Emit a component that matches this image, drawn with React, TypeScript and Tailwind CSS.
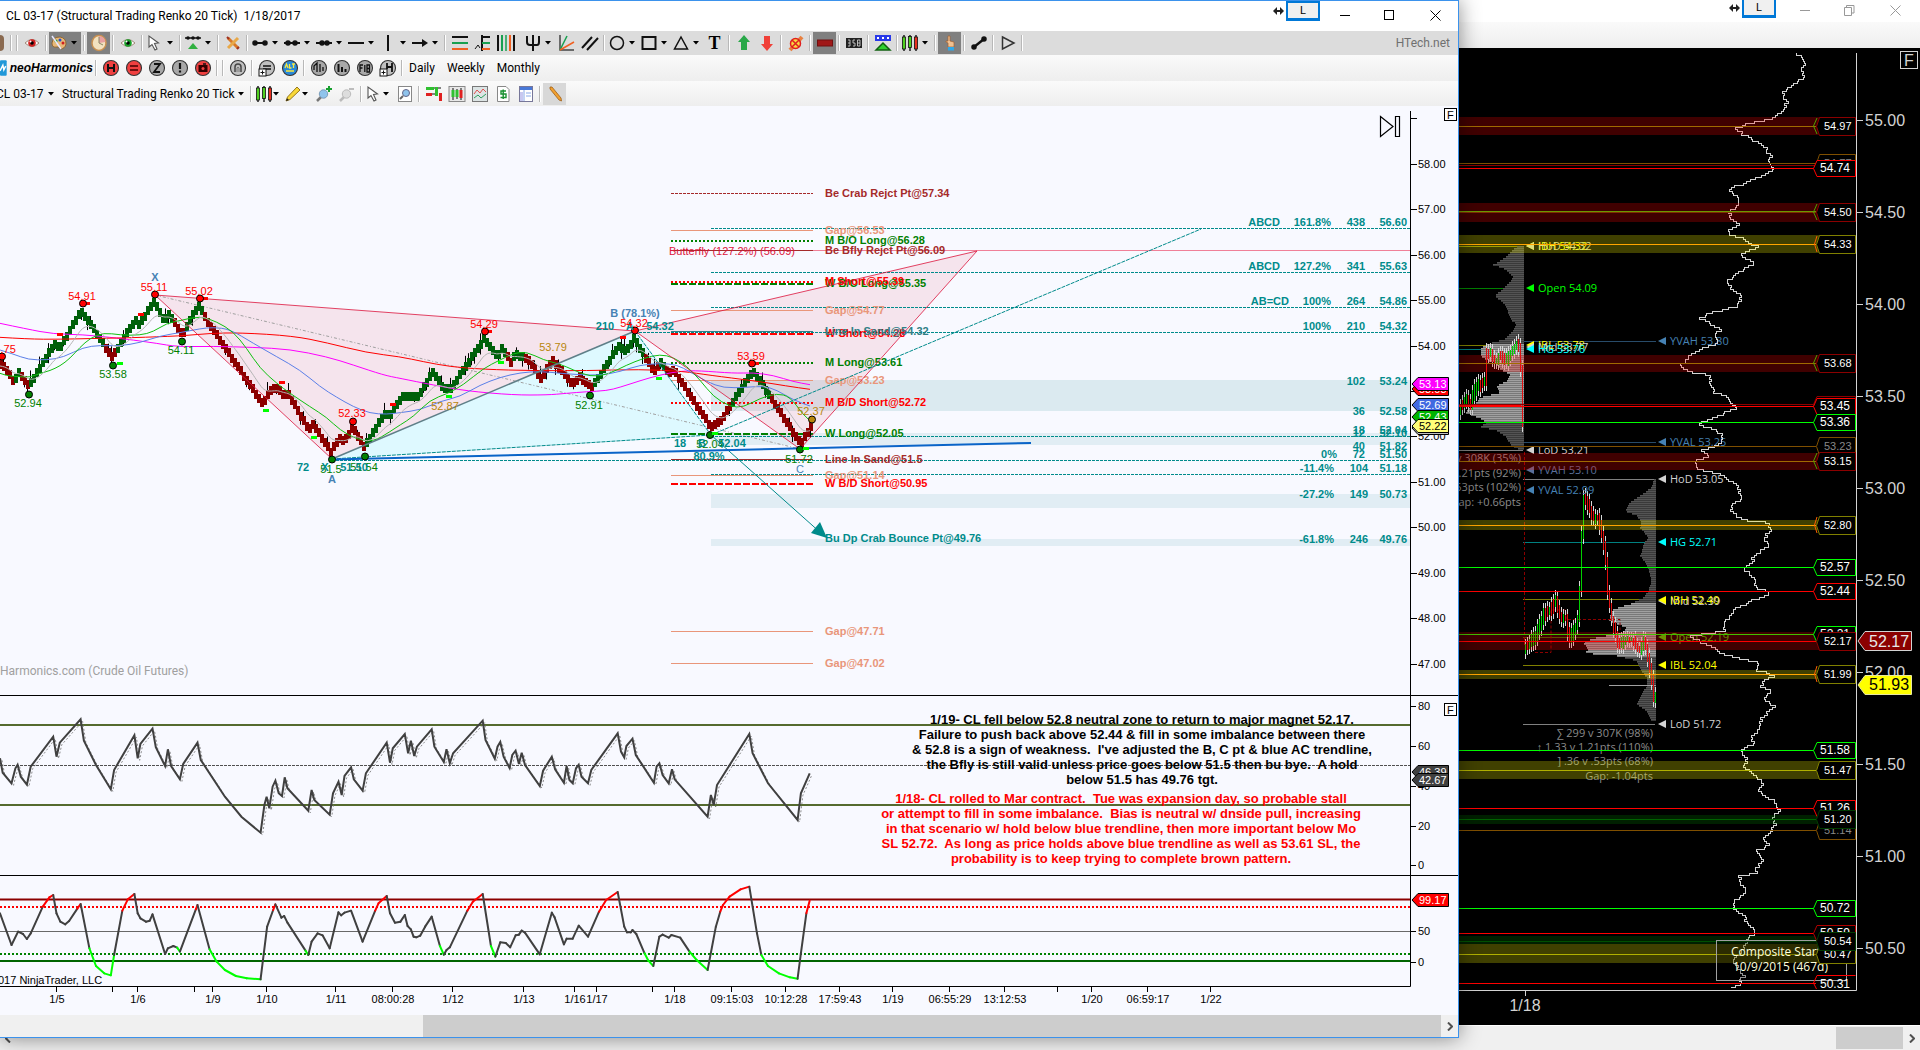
import type { ReactNode } from "react"

type Pt = [number, number]

const rand = (i: number) => {
  const v = Math.sin(i * 12.9898) * 43758.5453
  return v - Math.floor(v)
}

// flat "x,y x,y" strings, scaled to chart coordinates
const parse = (s: string, ox: number, oy: number, sx = 3, sy = 3): Pt[] =>
  s.split(" ").map((p) => {
    const [x, y] = p.split(",").map(Number)
    return [ox + x / sx, oy + y / sy]
  })

const toPoints = (pts: Pt[]) => pts.map(([x, y]) => `${x.toFixed(1)},${y.toFixed(1)}`).join(" ")

const smooth = (pts: Pt[]) => {
  let d = `M${pts[0][0]},${pts[0][1]}`
  for (let i = 1; i < pts.length - 1; i++) {
    const mx = (pts[i][0] + pts[i + 1][0]) / 2
    const my = (pts[i][1] + pts[i + 1][1]) / 2
    d += `Q${pts[i][0].toFixed(1)},${pts[i][1].toFixed(1)} ${mx.toFixed(1)},${my.toFixed(1)}`
  }
  const last = pts[pts.length - 1]
  return `${d}L${last[0]},${last[1]}`
}

const yAtX = (pts: Pt[], x: number) => {
  for (let i = 1; i < pts.length; i++) {
    if (x <= pts[i][0]) {
      const [x0, y0] = pts[i - 1]
      const [x1, y1] = pts[i]
      return y0 + ((y1 - y0) * (x - x0)) / (x1 - x0 || 1)
    }
  }
  return pts[pts.length - 1][1]
}

const xAtY = (pts: Pt[], y: number) => {
  for (let i = 1; i < pts.length; i++) {
    if (y <= pts[i][1]) {
      const [x0, y0] = pts[i - 1]
      const [x1, y1] = pts[i]
      return x0 + ((x1 - x0) * (y - y0)) / (y1 - y0 || 1)
    }
  }
  return pts[pts.length - 1][0]
}

/* ---------- price panel data ---------- */

const price: Pt[] = [
  ...parse("0,310 8,315 40,365 55,335 85,375 160,250 178,262 240,150 262,180 300,240 335,290 380,215 405,180 415,190 460,125 490,180 505,160 545,225 575,165 597,135 615,175 785,430 805,395 830,380 850,410 860,395 925,510 937,490 990,575 1018,530 1030,545 1055,500 1090,560 1150,460 1170,460 1210,400", 0, 260),
  ...parse("10,410 50,410 95,335 130,385 150,385 250,235 290,290 302,260 330,305 345,280 385,300 420,355 455,300 515,370 538,350 570,380 600,340 655,255 675,275 700,235 760,335 780,305 800,335 820,330 930,500 960,480 1057,330 1200,550 1238,485", 400, 260),
]

const redRanges: Pt[] = [[0, 13], [20, 28], [103, 117], [172, 184], [202, 366], [507, 512], [523, 594], [645, 658], [664, 731], [770, 813]]
const isRed = (x: number) => redRanges.some(([a, b]) => x >= a && x < b)

const bricks = Array.from({ length: 271 }, (_, i) => {
  const x = i * 3
  const y = Math.round(yAtX(price, x) / 2) * 2
  return {
    x,
    y,
    color: isRed(x) ? "#8b0000" : "#00600a",
    up: rand(i) > 0.84 ? 6 + rand(i + 500) * 6 : 0,
    down: rand(i + 900) > 0.84 ? 6 + rand(i + 1400) * 6 : 0,
  }
})

let ema = bricks[0].y
const emaLine: Pt[] = bricks.map((b) => {
  ema += (b.y - ema) * 0.2
  return [b.x, ema + 2]
})

const averages = [
  {
    color: "#ff00ff",
    pts: [
      ...parse("0,190 80,207 160,222 250,224 330,232 400,240 470,250 530,260 640,259 760,262 870,268 980,290 1060,315 1150,345", 0, 260),
      ...parse("0,355 100,375 200,393 340,405 440,405 500,400 560,395 620,392 660,382 720,362 780,345 840,333 900,332 1000,340 1060,338 1120,346 1180,365 1230,374", 400, 260),
    ],
  },
  {
    color: "#ff0000",
    pts: [
      ...parse("0,232 80,237 180,238 300,235 400,233 540,228 630,220 720,218 880,228 980,248 1100,278", 0, 260),
      ...parse("0,290 70,305 150,320 250,328 400,332 560,332 720,328 850,334 930,346 1060,362 1160,378 1230,388", 400, 260),
    ],
  },
  {
    color: "#5b7fe8",
    pts: [
      ...parse("0,270 40,282 85,299 140,300 190,292 250,262 300,256 360,258 420,248 480,228 540,218 600,206 640,202 690,208 760,250 830,290 900,330 960,380 1010,412 1060,440 1110,460 1160,463", 0, 260),
      ...parse("0,458 60,450 120,424 180,410 240,375 300,352 360,338 420,334 480,340 540,344 600,346 660,335 720,315 780,310 830,314 870,335 920,365 970,384 1040,382 1090,378 1130,390 1180,420 1230,438", 400, 260),
    ],
  },
  {
    color: "#10c010",
    pts: [
      ...parse("0,340 20,348 60,350 90,352 120,340 150,332 180,318 210,295 240,262 270,235 310,218 360,225 420,226 460,215 500,190 540,182 600,168 650,185 700,215 740,265 780,325 830,370 870,400 930,440 980,472 1020,510 1070,538 1120,545 1170,515", 0, 260),
      ...parse("0,495 40,470 90,420 140,402 190,375 250,325 300,300 340,280 380,275 430,300 480,312 520,330 570,350 620,345 680,315 730,295 780,283 820,292 860,318 900,360 940,410 990,440 1030,442 1080,415 1130,400 1170,410 1210,465 1240,490", 400, 260),
    ],
  },
]

const GREEN = "#008000"
const TEAL = "#008b8b"
const BROWN = "#a52a2a"
const SALMON = "#e9967a"

// [y, color, width, dash, label]
const levels: [number, string, number, string, string][] = [
  [193.5, BROWN, 1, "3 1", "Be Crab Rejct Pt@57.34"],
  [230.5, SALMON, 1, "", "Gap@56.53"],
  [241, GREEN, 2, "2 2", "M B/O Long@56.28"],
  [250.5, BROWN, 1, "", "Be Bfly Rejct Pt@56.09"],
  [284, GREEN, 2, "7 2", "W B/O Long@55.35"],
  [282, "#ff0000", 2, "2 2", "M Short@55.39"],
  [310.5, SALMON, 1, "", "Gap@54.77"],
  [334, "#ff0000", 2, "7 2", "W Short@54.28"],
  [331.5, "#2f7f86", 1, "", "Line In Sand@54.32"],
  [363, GREEN, 2, "2 2", "M Long@53.61"],
  [380.5, SALMON, 1, "", "Gap@53.23"],
  [403, "#ff0000", 2, "2 2", "M B/D Short@52.72"],
  [434, GREEN, 2, "7 2", "W Long@52.05"],
  [459.5, BROWN, 1, "", "Line In Sand@51.5"],
  [475.5, SALMON, 1, "", "Gap@51.14"],
  [484, "#ff0000", 2, "7 2", "W B/D Short@50.95"],
  [631.5, SALMON, 1, "", "Gap@47.71"],
  [663.5, SALMON, 1, "", "Gap@47.02"],
]

const fibLines: Pt[] = [[711, 228.5], [711, 272.5], [711, 307.5], [635, 332.5], [711, 436.5], [332, 460.5], [711, 474.5]]

// [baseline, name, percent, ticks, price]
const fibLabels: [number, string, string, string, string][] = [
  [226, "ABCD", "161.8%", "438", "56.60"],
  [270, "ABCD", "127.2%", "341", "55.63"],
  [305, "AB=CD", "100%", "264", "54.86"],
  [330, "", "100%", "210", "54.32"],
  [385, "", "", "102", "53.24"],
  [415, "", "", "36", "52.58"],
  [434, "", "", "18", "52.04"],
  [437, "", "", "12", "52.10"],
  [450, "", "", "40", "51.82"],
  [458, "", "0%", "72", "51.50"],
  [472, "", "-11.4%", "104", "51.18"],
  [498, "", "-27.2%", "149", "50.73"],
  [543, "", "-61.8%", "246", "49.76"],
]

// [text, x, baseline, color, bold]
const swings: [string, number, number, string, boolean?][] = [
  ["53.75", 2, 353, "#ff0000"],
  ["54.91", 82, 300, "#ff0000"],
  ["55.11", 154, 291, "#ff0000"],
  ["55.02", 199, 295, "#ff0000"],
  ["52.33", 352, 417, "#ff0000"],
  ["54.29", 484, 328, "#ff0000"],
  ["53.59", 751, 360, "#ff0000"],
  ["52.94", 28, 407, GREEN],
  ["53.58", 113, 378, GREEN],
  ["54.11", 181, 354, GREEN],
  ["52.91", 589, 409, GREEN],
  ["51.5", 331, 473, GREEN],
  ["51.54", 364, 471, GREEN],
  ["52.04", 710, 448, GREEN],
  ["51.72", 799, 463, GREEN],
  ["53.79", 553, 351, "#b8860b"],
  ["52.87", 445, 410, "#b8860b"],
  ["52.37", 811, 415, "#b8860b"],
  ["72", 303, 471, TEAL, true],
  ["X", 325, 471, TEAL, true],
  ["51.50", 354, 471, TEAL, true],
  ["210", 605, 330, TEAL, true],
  ["A", 630, 330, TEAL, true],
  ["54.32", 660, 330, TEAL, true],
  ["54.32", 634, 327, "#ff0000"],
  ["18", 680, 447, TEAL, true],
  ["B", 702, 447, TEAL, true],
  ["52.04", 732, 447, TEAL, true],
  ["80.9%", 709, 460, TEAL, true],
  ["X", 155, 281, "#4682b4", true],
  ["A", 332, 483, "#4682b4", true],
  ["B (78.1%)", 635, 317, "#4682b4", true],
  ["C", 800, 473, "#4682b4"],
]

const dots: [number, number, string][] = [
  [2, 356.5, "#ff0000"], [83, 303.5, "#ff0000"], [155, 294.5, "#ff0000"], [200, 298.5, "#ff0000"],
  [353, 421.5, "#ff0000"], [485, 331.5, "#ff0000"], [635, 330.5, "#ff0000"], [752, 363.5, "#ff0000"],
  [29, 394.5, GREEN], [113, 365.5, GREEN], [182, 341.5, GREEN], [332, 459.5, GREEN], [365, 456.5, GREEN],
  [590, 395.5, GREEN], [710, 435, GREEN], [800, 449.5, GREEN], [812, 419.5, "#b8860b"],
]

const redMarks: Pt[] = [[84, 303], [57, 334], [138, 314], [202, 298], [279, 382], [390, 404], [486, 331], [620, 337], [753, 363]]
const limeMarks: Pt[] = [[117, 363], [263, 410], [311, 437], [446, 396], [498, 362], [656, 378], [712, 433], [803, 448]]

const times: [number, string][] = [
  [57, "1/5"], [113, ""], [138, "1/6"], [195, ""], [213, "1/9"], [267, "1/10"], [336, "1/11"], [393, "08:00:28"],
  [453, "1/12"], [524, "1/13"], [575, "1/16"], [597, "1/17"], [653, ""], [675, "1/18"], [732, "09:15:03"],
  [786, "10:12:28"], [840, "17:59:43"], [893, "1/19"], [950, "06:55:29"], [1005, "13:12:53"], [1058, ""],
  [1092, "1/20"], [1148, "06:59:17"], [1211, "1/22"],
]

/* ---------- oscillators ---------- */

const stoch = parse(
  "0,355 5,398 21,430 28,385 32,374 38,410 49,434 56,380 97,290 103,350 109,308 147,238 153,302 175,375 202,448 208,390 245,286 251,355 256,312 278,266 284,322 301,378 306,328 312,378 328,418 334,372 360,308 366,360 410,470 440,530 475,578 482,495 486,470 491,505 497,440 502,422 508,460 514,468 519,412 524,445 562,512 568,450 573,480 601,524 607,460 617,425 623,465 628,408 640,382 645,418 661,452 667,400 705,308 711,368 716,325 738,282 744,340 749,302 755,348 760,320 787,268 792,320 809,366 814,328 820,370 826,340 880,242 885,300 902,356 907,320 912,306 918,350 929,384 934,345 940,332 946,372 951,338 957,375 984,438 990,392 1006,350 1012,388 1028,428 1033,378 1038,420 1044,430 1050,385 1055,374 1060,410 1072,430 1078,390 1126,280 1132,335 1138,352 1142,318 1153,296 1159,345 1192,428 1197,380 1202,370 1208,405 1219,430 1225,388 1230,418 1290,530 1296,465 1301,495 1307,435 1366,282 1372,340 1400,430 1454,540 1460,460 1476,400",
  0, 640, 1.823, 3,
)

const cci = parse(
  "0,820 21,915 33,875 42,882 49,897 56,880 78,800 90,772 97,765 103,820 110,845 119,853 126,843 141,806 147,792 163,925 175,978 190,1000 202,1006 208,945 223,812 233,778 245,762 251,820 256,835 266,845 273,842 278,823 301,942 306,925 316,918 323,923 328,935 357,808 360,795 382,928 395,965 410,990 430,1008 450,1015 475,1018 487,860 498,810 502,793 513,833 518,828 524,848 557,932 562,945 568,905 579,880 588,886 601,925 617,817 622,826 628,818 640,812 661,905 684,812 690,790 705,768 711,820 720,848 730,845 738,825 743,858 749,868 754,890 759,892 766,887 775,860 787,830 802,918 809,944 814,930 820,922 852,812 862,785 880,762 895,918 903,950 912,907 922,909 930,922 940,886 946,884 951,872 957,878 984,943 1006,818 1011,832 1028,913 1033,896 1044,896 1055,857 1072,890 1092,815 1105,780 1126,756 1138,860 1143,877 1150,877 1153,870 1160,882 1175,940 1182,962 1191,978 1202,890 1208,884 1219,893 1224,885 1240,893 1257,935 1270,960 1290,990 1305,860 1313,815 1318,795 1330,770 1350,748 1366,740 1380,880 1388,945 1400,978 1420,1000 1440,1012 1454,1016 1460,940 1470,820 1476,782",
  0, 640, 1.823, 3,
)

const cciColor = (a: Pt, b: Pt) => {
  const rising = b[1] < a[1]
  if (rising && a[1] < 914 && b[1] < 908) return "#ff0000"
  if (!rising && a[1] > 945 && b[1] > 948) return "#00ff00"
  if (a[1] > 974 && a[0] < 120) return "#00ff00"
  return "#404040"
}

function PriceTag({ y, text, fill, color = "#ffffff" }: { y: number; text: string; fill: string; color?: string }) {
  return (
    <g>
      <path d={`M1412,${y + 7}L1418,${y + 0.5}H1448.5V${y + 13.5}H1418Z`} fill={fill} stroke="#000" />
      <text x="1419" y={y + 11} fill={color} className="text-[11px]">{text}</text>
    </g>
  )
}

function PricePanel() {
  return (
    <g>
      {[[380, 31], [433, 12], [494, 14], [539, 7]].map(([y, h]) => (
        <rect key={y} x="711" y={y} width="699" height={h} fill={y === 380 ? "#dbeaf0" : "#e1edf4"} />
      ))}
      <path d="M155,295L635,331L332,459Z" fill="#dc143c" fillOpacity="0.09" />
      <path d="M332,459L635,331L711,435Z" fill="#00ffff" fillOpacity="0.1" />
      <path d="M635,331L977,251L800,449Z" fill="#dc143c" fillOpacity="0.09" />
      <path d="M155,295L800,449" stroke="#a0a0a0" strokeDasharray="3 2 1 2" />

      {fibLines.map(([x, y]) => (
        <path key={y} d={`M${x},${y}H1410`} stroke={TEAL} strokeDasharray="3 1" />
      ))}
      <path d="M671,250.5H1410" stroke="#f08098" />
      {levels.map(([y, color, w, dash, label]) => (
        <g key={label}>
          <path d={`M671,${y}H813`} stroke={color} strokeWidth={w} strokeDasharray={dash || undefined} />
          <text x="825" y={y + 3} fill={color} className="text-[11px] font-bold">{label}</text>
        </g>
      ))}
      <text x="825" y="542" fill={TEAL} className="text-[11px] font-bold">Bu Dp Crab Bounce Pt@49.76</text>
      <text x="669" y="255" fill="#dc143c" className="text-[11px]">Butterfly (127.2%) (56.09)</text>

      {bricks.map((b) => (
        <g key={b.x}>
          {b.up > 0 && <path d={`M${b.x + 0.5},${b.y}v${-b.up}`} stroke="#000" />}
          {b.down > 0 && <path d={`M${b.x + 0.5},${b.y}v${b.down}`} stroke="#000" />}
          <rect x={b.x - 1} y={b.y - 4} width="4" height="9" fill={b.color} shapeRendering="crispEdges" />
        </g>
      ))}
      {averages.map((a) => (
        <path key={a.color} d={smooth(a.pts)} stroke={a.color} fill="none" />
      ))}
      <path d={smooth(emaLine)} stroke="#b4b4b4" fill="none" />

      <path d="M332,459L155,295L635,331M635,331L800,449L977,251Z" stroke="#dc143c" strokeOpacity="0.8" fill="none" />
      <path d="M332,459L635,331" stroke="#5f7f88" strokeWidth="1.5" />
      <path d="M332,459L711,435L1201,229M635,331L711,435" stroke={TEAL} strokeDasharray="4 1" fill="none" />
      <path d="M711,435L822,534" stroke={TEAL} />
      <path d="M827,538L811,533L820,522Z" fill={TEAL} />
      <path d="M332,459.5L1031,443" stroke="#0a64c8" strokeWidth="2" />

      {redMarks.map(([x, y]) => <rect key={x} x={x} y={y - 1} width="6" height="3" fill="#ff0000" />)}
      {dots.map(([x, y, c]) => <circle key={x} cx={x} cy={y} r="3.5" fill={c} stroke="#000" />)}
      {limeMarks.map(([x, y]) => <rect key={x} x={x} y={y - 1} width="6" height="3" fill="#00ff00" />)}
      {swings.map(([t, x, y, c, bold], i) => (
        <text key={i} x={x} y={y} fill={c} textAnchor="middle" className={bold ? "text-[11px] font-bold" : "text-[11px]"}>{t}</text>
      ))}

      {fibLabels.map(([y, name, pct, ticks, value]) => (
        <g key={y} fill={TEAL} textAnchor="end" className="text-[11px] font-bold">
          <text x={name === "AB=CD" ? 1289 : 1280} y={y}>{name}</text>
          <text x={y > 460 ? 1334 : pct === "0%" ? 1337 : 1331} y={y}>{pct}</text>
          <text x={y > 460 ? 1368 : 1365} y={y}>{ticks}</text>
          <text x="1407" y={y}>{value}</text>
        </g>
      ))}

      <path d="M1380.5,116.5V136.5L1393,126.5ZM1395.5,116.5h4v20h-4Z" fill="none" stroke="#000" strokeWidth="1.2" />
      <text x="0" y="675" fill="#a0a0a0" className="font-['Roboto',sans-serif] text-[12px]">Harmonics.com (Crude Oil Futures)</text>

      {[59, 58, 57, 56, 55, 54, 53, 52, 51, 50, 49, 48, 47].map((p) => {
        const y = Math.round(209.3 + (57 - p) * 45.43)
        return (
          <g key={p}>
            <path d={`M1410,${y + 0.5}h7`} stroke="#000" />
            {p < 59 && <text x="1418" y={y + 4} className="text-[11px]">{p}.00</text>}
          </g>
        )
      })}
      <PriceTag y={382} text="53.03" fill="#ff0000" />
      <PriceTag y={377} text="53.13" fill="#ff00ff" />
      <PriceTag y={398} text="52.69" fill="#4169e1" />
      <PriceTag y={410} text="52.43" fill="#00b400" />
      <PriceTag y={421} text="52.20" fill="#c0c0c0" />
      <PriceTag y={419} text="52.22" fill="#ffff78" color="#000000" />
    </g>
  )
}

function Oscillators() {
  return (
    <g>
      <path d="M0,695.5H1459M0,875.5H1459" stroke="#000" />
      <path d="M0,725H1410M0,805H1410" stroke="#556b2f" strokeWidth="2" />
      <path d="M0,765.5H1410" stroke="#505050" strokeDasharray="3 1" />
      <polyline points={toPoints(stoch.map(([x, y]) => [x + 2, y + 2]))} stroke="#707070" strokeWidth="0.8" strokeDasharray="2 2" fill="none" />
      <polyline points={toPoints(stoch)} stroke="#404040" strokeWidth="2" fill="none" />

      <path d="M0,899.5H1410" stroke="#8b0000" strokeWidth="2" />
      <path d="M0,907H1410" stroke="#ff0000" strokeWidth="2" strokeDasharray="2 2" />
      <path d="M0,931.5H1410" stroke="#696969" />
      <path d="M0,954H1410" stroke="#008000" strokeWidth="2" strokeDasharray="2 2" />
      <path d="M0,961H1410" stroke="#006400" strokeWidth="2" />
      {cci.slice(1).map((b, i) => (
        <path key={i} d={`M${cci[i][0]},${cci[i][1]}L${b[0]},${b[1]}`} stroke={cciColor(cci[i], b)} strokeWidth="2" strokeLinecap="round" />
      ))}
      <text x="-2" y="984" className="text-[11px]">017 NinjaTrader, LLC</text>

      {[[706, "80"], [746, "60"], [786, "40"], [826, "20"], [865, "0"], [931, "50"], [962, "0"]].map(([y, t]) => (
        <g key={y}>
          <path d={`M1410,${Number(y) + 0.5}h6`} stroke="#000" />
          <text x="1418" y={Number(y) + 4} className="text-[11px]">{t}</text>
        </g>
      ))}
      <PriceTag y={765} text="46.39" fill="#404040" />
      <PriceTag y={773} text="42.67" fill="#404040" />
      <PriceTag y={893} text="99.17" fill="#ff0000" />
      <path d="M1410.5,111V986.5H0" stroke="#000" fill="none" />
      {times.map(([x, t]) => (
        <g key={x}>
          <path d={`M${x - 0.5},986v6`} stroke="#000" />
          <text x={x} y="1003" textAnchor="middle" className="text-[11px]">{t}</text>
        </g>
      ))}
    </g>
  )
}

const notes = [
  {
    x: 1142,
    y: 724,
    color: "#000000",
    lines: [
      "1/19- CL fell below 52.8 neutral zone to return to major magnet 52.17.",
      "Failure to push back above 52.44 & fill in some imbalance between there",
      "& 52.8 is a sign of weakness.\u00a0 I've adjusted the B, C pt & blue AC trendline,",
      "the Bfly is still valid unless price goes below 51.5 then bu bye.\u00a0 A hold",
      "below 51.5 has 49.76 tgt.",
    ],
  },
  {
    x: 1121,
    y: 803,
    color: "#ff0000",
    lines: [
      "1/18- CL rolled to Mar contract.\u00a0 Tue was expansion day, so probable stall",
      "or attempt to fill in some imbalance.\u00a0 Bias is neutral w/ dnside pull, increasing",
      "in that scenario w/ hold below blue trendline, then more important below Mo",
      "SL 52.72.\u00a0 As long as price holds above blue trendline as well as 53.61 SL, the",
      "probability is to keep trying to complete brown pattern.",
    ],
  },
]

function RenkoChart() {
  return (
    <svg viewBox="0 106 1458 908" preserveAspectRatio="xMinYMin meet" className="min-h-0 w-full flex-1 bg-[#f8f9ff] font-['Liberation_Sans',sans-serif]">
      <PricePanel />
      <Oscillators />
      {notes.map((n) => (
        <g key={n.x} fill={n.color} textAnchor="middle" className="text-[13px] font-bold">
          {n.lines.map((l, i) => (
            <text key={i} x={n.x} y={n.y + i * 15}>{l}</text>
          ))}
        </g>
      ))}
      {[108, 703].map((y) => (
        <g key={y}>
          <rect x="1444.5" y={y + 0.5} width="12" height="12" fill="#fff" stroke="#000" />
          <text x="1447" y={y + 11} className="text-[11px]">F</text>
        </g>
      ))}
    </svg>
  )
}

/* ---------- composite profile chart ---------- */

const composite: Pt[] = [
  [1796, 53], [1803, 57], [1807, 63], [1801, 68], [1805, 74], [1800, 79], [1790, 86], [1784, 89], [1782, 95], [1787, 100], [1784, 106],
  ...parse("985,70 960,82 900,95 857,112 880,130 915,150 945,170 960,195 955,210 968,235 930,255 885,275 838,292 855,310 870,335 838,360 840,378 865,400 835,418 840,432 880,440 895,455 925,465 890,480 870,495 915,512 880,535 835,565 840,590 875,615 860,645 820,655 775,665 750,682 785,700 812,715 788,730 800,755 750,775 715,795 695,820 710,840 770,850 785,870 780,885 795,905 830,912 838,935 860,948 800,975 740,998 790,1015 820,1030 808,1055 755,1078 775,1095 730,1112 750,1135 810,1150", 1450, 90),
  ...parse("830,115 860,130 865,150 875,170 850,185 840,205 860,225 900,238 955,245 960,265 940,290 960,310 920,335 905,350 908,365 880,382 900,400 915,420 920,440 960,455 900,480 850,505 830,540 820,568 780,575 720,582 750,600 780,615 820,638 880,655 930,665 915,685 950,695 968,705 940,718 930,735 965,748 940,770 970,795 945,820 925,845 925,865 905,890 910,905 870,930 892,950 880,975 895,990 925,1010 940,1025 925,1045", 1450, 440),
  ...parse("930,40 970,55 985,85 965,110 980,130 960,150 940,175 960,190 915,210 940,235 920,255 920,275 870,285 870,310 890,320 885,335 855,360 850,385 885,405 885,425 905,435 910,460 890,470 885,480 880,500 850,540 880,580 870,605 835,628", 1450, 780),
]

let stairs = `M${composite[0][0]},53`
for (let y = 53; y < 989; y += 2) {
  stairs += `V${y}H${Math.round(xAtY(composite, y) + (rand(y) - 0.5) * 4)}`
}

const session1 = parse("200,468 165,500 130,522 165,535 190,560 170,585 133,615 165,640 185,690 200,700 190,720 165,745 110,760 92,775 95,800 130,815 150,835 180,850 170,870 140,885 150,905 90,920 75,940 45,965 95,985 110,995 92,1008 140,1020 165,1035 185,1065 215,1080", 1450, 90)
const session2 = parse("612,118 605,140 570,165 540,185 525,210 560,225 575,245 570,260 595,290 580,310 575,335 570,345 590,370 600,400 605,420 595,450 580,470 540,490 490,505 475,540 530,560 520,575 440,590 400,605 415,625 405,637 500,645 560,660 575,690 590,710 590,735 570,770 560,790 590,810 605,840", 1450, 440)

const bars1 = parse("30,950 45,930 60,940 75,890 95,880 105,870 107,790 120,790 135,820 150,790 165,815 180,790 196,765 205,780 211,850 214,960 220,1060", 1450, 90)
const bars2 = parse("225,620 240,610 262,570 280,520 300,510 315,480 330,540 345,530 355,600 375,560 385,520 390,340 400,170 410,190 425,240 440,230 455,290 465,360 470,450 480,520 490,570 505,620 520,600 545,600 565,630 580,600 595,670 605,730 612,800 617,740", 1450, 440)

function Histogram({ pts, right, value }: { pts: Pt[]; right: number; value: Pt }) {
  const top = Math.round(pts[0][1])
  const rows = Math.round((pts[pts.length - 1][1] - top) / 2)
  return (
    <g shapeRendering="crispEdges">
      {Array.from({ length: rows }, (_, i) => {
        const y = top + i * 2
        const x = Math.round(xAtY(pts, y))
        const bright = y >= value[0] && y <= value[1]
        return (
          <g key={y}>
            <rect x={x} y={y} width={right - x} height="1" fill={bright ? "#a0a0a0" : "#545454"} />
            <rect x={x} y={y + 1} width={right - x} height="1" fill={bright ? "#787878" : "#3a3a3a"} />
          </g>
        )
      })}
    </g>
  )
}

function Bars({ pts }: { pts: Pt[] }) {
  const count = Math.floor((pts[pts.length - 1][0] - pts[0][0]) / 2)
  return (
    <g shapeRendering="crispEdges">
      {Array.from({ length: count + 1 }, (_, i) => {
        const x = Math.round(pts[0][0] + i * 2)
        const y = yAtX(pts, x)
        const prev = yAtX(pts, x - 2)
        const top = Math.min(y, prev) - 2 - rand(i + 7) * 5
        const bottom = Math.max(y, prev) + 2 + rand(i + 31) * 5
        return (
          <g key={x}>
            <rect x={x} y={top - 5} width="1" height={bottom - top + 10} fill="#d8d8d8" />
            <rect x={x} y={top} width="1" height={bottom - top} fill={y > prev || rand(i) > 0.7 ? "#e01010" : "#00d000"} />
          </g>
        )
      })}
    </g>
  )
}

const zones: [number, number, string][] = [
  [117, 18, "#ff0000"], [203, 19, "#ff0000"], [235, 18, "#ffff00"], [355, 17, "#ff0000"], [453, 17, "#ff0000"],
  [520, 10, "#ffff00"], [632, 18, "#ff0000"], [670, 9, "#ffff00"], [761, 18, "#ffff00"], [815, 9, "#008000"],
  [936, 8, "#008000"], [944, 19, "#ffff00"],
]

const rules: [number, string][] = [
  [126.5, "#a06a00"], [163.5, "#7f4f00"], [165.5, "#8b0000"], [168.5, "#ff0000"], [211.5, "#6a9a00"], [212.5, "#803000"],
  [244.5, "#ffa500"], [363.5, "#a06a00"], [404.5, "#8b0000"], [406.5, "#ff0000"],
  [422.5, "#00ff00"], [446.5, "#7f4f00"], [461.5, "#a06a00"], [525.5, "#ffa500"],
  [567.5, "#00ff00"], [591.5, "#ff0000"], [634.5, "#40c000"], [641.5, "#ff0000"],
  [674.5, "#ffa500"], [750.5, "#00ff00"], [770.5, "#b0b000"], [808.5, "#ff0000"],
  [819.5, "#006000"], [830.5, "#7f4f00"], [908.5, "#00ff00"], [933.5, "#ff0000"],
  [941.5, "#005000"], [954.5, "#b0b000"], [983.5, "#ff0000"],
]

// [y, text, border, zone level (smaller tag), text colour]
const tags: [number, string, string, boolean, string][] = [
  [163, "54.77", "#7f4f00", true, "#888888"],
  [126, "54.97", "#8b0000", true, "#ffffff"],
  [168, "54.74", "#ff0000", false, "#ffffff"],
  [212, "54.50", "#8b0000", true, "#ffffff"],
  [244, "54.33", "#808000", true, "#ffffff"],
  [363, "53.68", "#8b0000", true, "#ffffff"],
  [404, "53.46", "#8b0000", false, "#ffffff"],
  [406, "53.45", "#ff0000", false, "#ffffff"],
  [446, "53.23", "#7f4f00", true, "#888888"],
  [422, "53.36", "#00ff00", false, "#ffffff"],
  [461, "53.15", "#8b0000", true, "#ffffff"],
  [525, "52.80", "#808000", true, "#ffffff"],
  [567, "52.57", "#00ff00", false, "#ffffff"],
  [591, "52.44", "#ff0000", false, "#ffffff"],
  [634, "52.21", "#00ff00", false, "#ffffff"],
  [641, "52.17", "#8b0000", true, "#ffffff"],
  [674, "51.99", "#808000", true, "#ffffff"],
  [750, "51.58", "#00ff00", false, "#ffffff"],
  [770, "51.47", "#808000", true, "#ffffff"],
  [808, "51.26", "#ff0000", false, "#ffffff"],
  [830, "51.14", "#7f4f00", true, "#888888"],
  [819, "51.20", "#003c00", true, "#ffffff"],
  [908, "50.72", "#00ff00", false, "#ffffff"],
  [933, "50.59", "#b00000", false, "#ffffff"],
  [954, "50.47", "#808000", true, "#ffffff"],
  [941, "50.54", "#003c00", true, "#ffffff"],
]

// [marker x, y, text, colour]
const marks: [number, number, string, string][] = [
  [1526, 246, "IBH 54.32", "#ffff00"],
  [1526, 246, "HoD 54.32", "#d3d3a0"],
  [1526, 288, "Open 54.09", "#00ff00"],
  [1526, 345, "IBL 53.78", "#ffff00"],
  [1526, 347, "Mid 53.77", "#d3d3d3"],
  [1526, 349, "HG 53.76", "#00ffff"],
  [1526, 450, "LoD 53.21", "#d3d3d3"],
  [1526, 470, "YVAH 53.10", "#5a6f9a"],
  [1526, 490, "YVAL 52.99", "#4682b4"],
  [1658, 341, "YVAH 53.80", "#4682b4"],
  [1658, 442, "YVAL 53.25", "#4682b4"],
  [1658, 479, "HoD 53.05", "#d3d3d3"],
  [1658, 542, "HG 52.71", "#00ffff"],
  [1658, 601, "Mid 52.39", "#d3d3d3"],
  [1658, 600, "IBH 52.40", "#ffff00"],
  [1658, 637, "Open 52.19", "#40c000"],
  [1658, 665, "IBL 52.04", "#ffff00"],
  [1658, 724, "LoD 51.72", "#d3d3d3"],
]

const stats: [number, number, string][] = [
  [1521, 462, "∑ 107 v 308K (35%)"],
  [1521, 477, "↑ 1.11 v 1.21pts (92%)"],
  [1521, 491, "] .54 v .53pts (102%)"],
  [1521, 506, "Gap: +0.66pts"],
  [1653, 737, "∑ 299 v 307K (98%)"],
  [1653, 751, "↑ 1.33 v 1.21pts (110%)"],
  [1653, 765, "] .36 v .53pts (68%)"],
  [1653, 780, "Gap: -1.04pts"],
]

function ProfileChart() {
  return (
    <svg viewBox="1459 48 461 977" preserveAspectRatio="xMinYMin meet" className="h-full w-[461px] shrink-0 font-['Liberation_Sans',sans-serif]">
      <path d="M1459,246.5H1520M1459,345.5H1500" stroke="#808000" />
      <path d="M1459,288.5H1506" stroke="#008000" />
      <path d="M1459,349.5H1500M1523,542.5H1655" stroke="#008080" />
      <path d="M1523,341.5H1656M1523,442.5H1656" stroke="#284b69" />
      <path d="M1523,479.5H1655M1459,450.5H1523M1523,724.5H1655" stroke="#808080" />
      <path d="M1523,599.5H1640M1523,665.5H1645" stroke="#808000" />
      <path d="M1523,637.5H1655" stroke="#2a6a00" />
      <Histogram pts={session1} right={1524} value={[343, 420]} />
      <Histogram pts={session2} right={1656} value={[603, 656]} />
      <path d="M1609,685.5H1656" stroke="#a0a0a0" />
      <path d="M1524.5,452V645M1535,652.5H1551V610H1566V619.5H1620V630" stroke="#8b0000" strokeDasharray="3 2" fill="none" />
      <Bars pts={bars1} />
      <Bars pts={bars2} />
      {stats.map(([x, y, t]) => (
        <text key={y} x={x} y={y} textAnchor="end" fill="#8c8c8c" className="font-['Open_Sans',sans-serif] text-[11px]">{t}</text>
      ))}
      {marks.map(([x, y, t, c]) => (
        <g key={t} fill={c} className="font-['Open_Sans',sans-serif] text-[11px]">
          <path d={`M${x},${y}l8,-4v8Z`} />
          <text x={x + 12} y={y + 4}>{t}</text>
        </g>
      ))}
      <path d={stairs} stroke="#d3d3d3" fill="none" shapeRendering="crispEdges" />
      {zones.map(([y, h, c]) => <rect key={y} x="1459" y={y} width="397" height={h} fill={c} fillOpacity="0.25" />)}
      {rules.map(([y, c]) => <path key={y} d={`M1459,${y}H1816`} stroke={c} />)}
      <path d="M1459,406H1521" stroke="#ff0000" strokeWidth="2" />

      <rect x="1716.5" y="940.5" width="130" height="40" fill="#000" fillOpacity="0.3" stroke="#a0a0a0" />
      <text x="1820" y="988" fill="#fff" className="text-[12px]">50.31</text>
      <path d="M1816.5,989L1813.5,983L1817,975.5H1855.5" stroke="#ff0000" fill="none" />
      <g fill="#ffffdc" className="font-['Open_Sans',sans-serif] text-[12px]">
        <text x="1731" y="956">Composite Start</text>
        <text x="1733" y="971">10/9/2015 (467d)</text>
      </g>
      {tags.map(([y, t, c, small, fg]) => (
        <g key={t}>
          <path d={small ? `M1816.5,${y + 0.5}L1819.5,${y - 8.5}H1855.5V${y + 9.5}H1819.5Z` : `M1813.5,${y + 0.5}L1817,${y - 7.5}H1855.5V${y + 8.5}H1817Z`} fill="#000" stroke={c} />
          <text x={small ? 1824 : 1820} y={y + 4} fill={fg} className={small ? "text-[11px]" : "text-[12px]"}>{t}</text>
        </g>
      ))}
      {[126, 212, 363, 461].map((y) => (
        <path key={y} d={`M1817,${y + 8}L1813.5,${y}L1817,${y - 8}`} stroke="#50a000" fill="none" />
      ))}
      {[244, 525, 674].map((y) => (
        <path key={y} d={`M1817,${y + 8}L1814.5,${y}L1817,${y - 8}`} stroke="#ff6000" fill="none" />
      ))}

      <path d="M1856.5,53V990.5H1459M1525.5,990v6" stroke="#d3d3d3" fill="none" />
      {[55, 54.5, 54, 53.5, 53, 52.5, 52, 51.5, 51, 50.5].map((p) => {
        const y = Math.round(120.3 + (55 - p) * 184)
        return (
          <g key={p}>
            <path d={`M1856,${y + 0.5}h7`} stroke="#d3d3d3" />
            <text x="1865" y={y + 6} fill="#d3d3d3" className="text-[16px]">{p.toFixed(2)}</text>
          </g>
        )
      })}
      <path d="M1858,641L1865,631.5H1911.5V650.5H1865Z" fill="#8b0000" stroke="#d3d3d3" />
      <text x="1869" y="647" fill="#e8e8e8" className="text-[16px]">52.17</text>
      <path d="M1858,685L1865,675.5H1911.5V694.5H1865Z" fill="#ffff00" stroke="#e8e8a0" />
      <text x="1869" y="690" className="text-[16px]">51.93</text>
      <text x="1525" y="1011" textAnchor="middle" fill="#d3d3d3" className="text-[16px]">1/18</text>
      <rect x="1900.5" y="51.5" width="17" height="17" fill="none" stroke="#d3d3d3" />
      <text x="1904" y="66" fill="#d3d3d3" className="text-[16px]">F</text>
    </svg>
  )
}

/* ---------- toolbar ---------- */

const Ico = ({ children }: { children: ReactNode }) => (
  <svg width="18" height="18" viewBox="0 0 18 18" fill="none" stroke="#111" strokeWidth="1.5" className="shrink-0">{children}</svg>
)

const Sep = () => <span className="mx-0.5 h-4 w-0.5 shrink-0 border-l border-[#b8b8b8] bg-white" />

function Tool({ label, active, children }: { label: string; active?: boolean; children: ReactNode }) {
  return (
    <button aria-label={label} className={`flex h-[22px] w-[23px] shrink-0 items-center justify-center ${active ? "bg-[#808080]" : ""}`}>
      {children}
    </button>
  )
}

function Drop({ label, active, tight, children }: { label: string; active?: boolean; tight?: boolean; children: ReactNode }) {
  return (
    <button aria-label={label} className={`flex h-[22px] shrink-0 items-center justify-between pr-1 pl-px ${tight ? "w-[29px]" : "w-8"} ${active ? "bg-[#808080]" : ""}`}>
      {children}
      <Caret />
    </button>
  )
}

const Caret = () => (
  <svg width="6" height="4" viewBox="0 0 6 4" className="shrink-0"><path d="M0,0H6L3,3.5Z" fill="#000" /></svg>
)

const Eye = ({ color }: { color: string }) => (
  <Ico>
    <path d="M2,9Q9,2 16,9Q9,16 2,9Z" fill="#fff" stroke="#a08878" strokeWidth="1" />
    <circle cx="9" cy="9" r="3.8" fill={color} stroke="none" />
    <circle cx="9" cy="9" r="1.8" fill="#000" stroke="none" />
    <circle cx="7.5" cy="7.5" r="1" fill="#fff" stroke="none" />
  </Ico>
)

const Cursor = () => (
  <Ico><path d="M3,2V13L6,10.5L9,16L11,15L8.5,9.5L12.5,9Z" fill="#fff" stroke="#555" strokeWidth="1.1" /></Ico>
)

const Candles = () => (
  <Ico>
    <path d="M3,1V17M9,1V17M15,1V17" strokeWidth="1.4" />
    <rect x="1.5" y="3" width="3" height="12" fill="#50d020" strokeWidth="0.8" />
    <rect x="7.5" y="2.5" width="3" height="11" fill="#50d020" strokeWidth="0.8" />
    <rect x="13.5" y="3" width="3" height="12" fill="#e83020" strokeWidth="0.8" />
  </Ico>
)

const Pencil = ({ color }: { color: string }) => (
  <Ico>
    <path d="M2,16L3.5,12L13,2L16,5L6,14.5Z" fill={color} stroke="#8a6a10" strokeWidth="0.9" />
    <path d="M2,16L3,13.2L5,15Z" fill="#222" stroke="none" />
  </Ico>
)

const Lens = ({ mark, muted }: { mark: ReactNode; muted?: boolean }) => (
  <Ico>
    <path d="M2,16L6,12" stroke={muted ? "#bbb" : "#777"} strokeWidth="2.5" />
    <circle cx="8.5" cy="9" r="4.2" fill={muted ? "#ddd" : "#8fc4ec"} stroke={muted ? "#bbb" : "#7a9cba"} strokeWidth="1" />
    {mark}
  </Ico>
)

function DrawingToolbar() {
  return (
    <div className="flex h-6 shrink-0 items-center bg-[#dcdcdc]">
      <span className="h-4 w-1 shrink-0 rounded-r-sm bg-[#8a6a50]" />
      <span className="w-1 shrink-0" />
      <Sep /><Sep />
      <Tool label="Hide"><Eye color="#d02020" /></Tool>
      <Sep />
      <Drop label="Palette" active>
        <Ico>
          <path d="M2,9Q3,3 10,3Q16,4 16,10Q15,15 10,15Q9,12 7,13Q2,14 2,9Z" fill="#e8b878" stroke="#8a5a20" strokeWidth="0.8" />
          <circle cx="6" cy="7" r="1.5" fill="#20a030" stroke="none" />
          <circle cx="10" cy="6" r="1.5" fill="#2050d0" stroke="none" />
          <circle cx="13" cy="9" r="1.5" fill="#d02020" stroke="none" />
          <path d="M2,2L11,15" stroke="#e8e8ff" />
        </Ico>
      </Drop>
      <Sep />
      <Tool label="Sessions" active>
        <Ico>
          <ellipse cx="9" cy="9" rx="7" ry="7.5" fill="#f3e2c0" stroke="#c89050" />
          <path d="M9,9V2A7,7 0 0 1 15.5,8Z" fill="#e8a0a0" stroke="none" />
          <path d="M9,3V9L13,11" stroke="#886" strokeWidth="1" />
        </Ico>
      </Tool>
      <Sep />
      <Tool label="Show"><Eye color="#18a028" /></Tool>
      <Sep />
      <Drop label="Cursor"><Cursor /></Drop>
      <Sep />
      <Drop label="Markers">
        <Ico>
          <path d="M1,4H17" /><circle cx="4" cy="4" r="1.8" fill="#111" stroke="none" /><circle cx="9" cy="4" r="1.8" fill="#111" stroke="none" /><circle cx="14" cy="4" r="1.8" fill="#111" stroke="none" />
          <path d="M4,15L9,9L14,15Z" fill="#30b040" stroke="none" />
        </Ico>
      </Drop>
      <Sep />
      <Tool label="Drawing tools">
        <Ico><path d="M4,4L14,14" stroke="#d87828" strokeWidth="3" /><path d="M14,4L4,14" stroke="#e8a848" strokeWidth="3" /><path d="M3,3L5,5M15,13L13,15" stroke="#a03020" strokeWidth="2" /></Ico>
      </Tool>
      <Sep />
      <Drop label="Segment"><Ico><path d="M3,9H15" strokeWidth="2" /><circle cx="4" cy="9" r="2" fill="#111" /><circle cx="14" cy="9" r="2" fill="#111" /></Ico></Drop>
      <Drop label="Extended line"><Ico><path d="M1,9H17" strokeWidth="2" /><circle cx="5" cy="9" r="2" fill="#111" /><circle cx="12" cy="9" r="2" fill="#111" /></Ico></Drop>
      <Drop label="Ray"><Ico><path d="M1,9H17" strokeWidth="2" /><circle cx="7" cy="9" r="2" fill="#111" /><circle cx="12" cy="9" r="2" fill="#111" /></Ico></Drop>
      <Drop label="Horizontal line"><Ico><path d="M1,9H17" strokeWidth="2" /></Ico></Drop>
      <Drop label="Vertical line"><Ico><path d="M9,1V17" strokeWidth="2" /></Ico></Drop>
      <Drop label="Arrow line"><Ico><path d="M1,9H14" strokeWidth="2" /><path d="M11,5L17,9L11,13Z" fill="#111" stroke="none" /></Ico></Drop>
      <Sep />
      <Tool label="Retracement"><Ico><path d="M1,3H17" strokeWidth="2" /><path d="M1,9H17" stroke="#18a050" strokeWidth="2" /><path d="M1,15H17" stroke="#f06020" strokeWidth="2" /></Ico></Tool>
      <Tool label="Extensions"><Ico><path d="M8,1V17M8,3H16" strokeWidth="2" /><path d="M8,9H16" stroke="#18a050" strokeWidth="2" /><path d="M8,15H16" stroke="#f06020" strokeWidth="2" /><path d="M1,15L4,11L6,14" strokeWidth="1" /></Ico></Tool>
      <Tool label="Time extensions"><Ico><path d="M1,1V17M17,1V17" strokeWidth="2" /><path d="M5,1V17" stroke="#18a050" strokeWidth="2" /><path d="M9,1V17" stroke="#18a050" /><path d="M13,1V17" stroke="#f06020" strokeWidth="2" /></Ico></Tool>
      <span className="w-1.5 shrink-0" />
      <Drop label="Pitchfork"><Ico><path d="M3,2V8Q3,11 6,11H13Q15,11 15,8V2M9,1V17" strokeWidth="2" /></Ico></Drop>
      <Tool label="Fan"><Ico><path d="M2,1V16H16" stroke="#444" /><path d="M2,16L9,2" stroke="#18a050" /><path d="M2,16L16,8" stroke="#f06020" /></Ico></Tool>
      <Tool label="Channel"><Ico><path d="M1,14L11,3M6,16L17,4" strokeWidth="2" /></Ico></Tool>
      <Sep />
      <Drop label="Ellipse"><Ico><circle cx="9" cy="9" r="6.5" /></Ico></Drop>
      <Drop label="Rectangle"><Ico><rect x="2.5" y="3" width="13" height="12" strokeWidth="2" /></Ico></Drop>
      <Drop label="Triangle"><Ico><path d="M9,3L15.5,15H2.5Z" /></Ico></Drop>
      <Tool label="Text"><span className="font-['Liberation_Serif',serif] text-[18px] leading-5 font-bold">T</span></Tool>
      <Sep />
      <Tool label="Arrow up"><Ico><path d="M9,1L15,8H12V16H6V8H3Z" fill="#28a848" stroke="none" /></Ico></Tool>
      <Tool label="Arrow down"><Ico><path d="M9,17L15,10H12V2H6V10H3Z" fill="#f04038" stroke="none" /></Ico></Tool>
      <Sep />
      <Tool label="Remove drawings">
        <Ico><path d="M3,16L15,3" stroke="#e88040" strokeWidth="4" /><circle cx="8.5" cy="9.5" r="5" fill="#f8d840" stroke="#e02020" /><path d="M5,6L12,13M12,6L5,13" stroke="#e02020" /></Ico>
      </Tool>
      <Sep />
      <Tool label="Line style" active><Ico><rect x="1.5" y="6" width="15" height="6" fill="#a01818" stroke="#701010" strokeWidth="1" /></Ico></Tool>
      <Sep />
      <Tool label="Counter">
        <Ico><rect x="1" y="4" width="16" height="10" fill="#222" stroke="none" /><path d="M3,6H5V12H3M5,9H3M10,6H8V9H10V12H8M12.5,6h2.5v6h-2.5ZM12.5,9H15" stroke="#ccc" strokeWidth="0.9" /></Ico>
      </Tool>
      <Sep />
      <Tool label="Levels">
        <Ico><rect x="1" y="1" width="16" height="6" fill="#2838e8" stroke="none" /><path d="M3,3h2v2H3ZM8,3h2v2H8ZM13,3h2v2h-2Z" fill="#fff" stroke="none" /><path d="M2,16L9,9L16,16Z" fill="#30d030" stroke="#106010" /></Ico>
      </Tool>
      <Sep />
      <Drop label="Bars"><Candles /></Drop>
      <Sep />
      <Tool label="Pointer" active>
        <Ico><path d="M7,13V9L5,8V7L7,7V2H9V7L13,8V13Z" fill="#f0c090" stroke="#a06030" strokeWidth="0.7" /><rect x="7" y="13" width="6" height="3.5" fill="#30a8e8" stroke="none" /></Ico>
      </Tool>
      <Sep />
      <Tool label="Trend"><Ico><path d="M4,13L14,5" strokeWidth="2.5" /><circle cx="4" cy="13" r="2" fill="#111" /><circle cx="14" cy="5" r="2" fill="#111" /></Ico></Tool>
      <Sep />
      <Tool label="Run"><Ico><path d="M3.5,3L15,9L3.5,15Z" stroke="#333" /></Ico></Tool>
      <Sep />
      <span className="mr-2 ml-auto text-[12px] text-[#707070]">HTech.net</span>
    </div>
  )
}

const Coin = ({ label, fill, children }: { label: string; fill: string; children: ReactNode }) => (
  <Tool label={label}>
    <Ico>
      <circle cx="9" cy="9" r="7.5" fill={fill} stroke="#333" strokeWidth="1.1" />
      {children}
    </Ico>
  </Tool>
)

function HarmonicsToolbar() {
  return (
    <div className="flex h-[26px] shrink-0 items-center bg-gradient-to-b from-[#fafafa] to-[#eeeeee]">
      <div className="flex w-[93px] shrink-0 items-center">
        <svg width="8" height="16" viewBox="0 0 8 16"><rect width="7" height="16" rx="1" fill="#2098d8" /><path d="M0,11L3,5L4,10L6,6" stroke="#fff" strokeWidth="1.5" fill="none" /></svg>
        <span className="ml-0.5 font-['Liberation_Sans',sans-serif] text-[12px] font-bold italic">neoHarmonics</span>
      </div>
      <Sep />
      <Coin label="Harmonics" fill="#f04040"><path d="M6,5V13M12,5V13M6,9H12" strokeWidth="2" /></Coin>
      <Coin label="Levels" fill="#f04040"><path d="M5,7H13M5,11H13" stroke="#400" strokeWidth="1.5" /></Coin>
      <Coin label="Zigzag" fill="#a8a8a8"><path d="M6,5H12L6,13H12" strokeWidth="1.8" /></Coin>
      <Coin label="Alerts" fill="#a8a8a8"><path d="M9,4V10M9,11.5V13.5" strokeWidth="2.2" /></Coin>
      <Coin label="Snapshot" fill="#f04040"><rect x="4.5" y="6" width="9" height="7" fill="#300" stroke="none" /><path d="M9,5h3" /><circle cx="9" cy="9.5" r="1.5" fill="#f04040" stroke="none" /></Coin>
      <Sep /><Sep />
      <Coin label="Magnet" fill="#c0c0c0"><path d="M6,13V8Q6,5 9,5Q12,5 12,8V13" stroke="#444" /><path d="M8,13V9Q9,7 10,9V13" stroke="#666" strokeWidth="0.8" /></Coin>
      <Sep />
      <Coin label="Add level" fill="#c0c0c0"><path d="M5,7H13M5,10H13" /><rect x="1" y="10" width="7" height="7" fill="#fff" strokeWidth="1" /><path d="M4.5,11.5V15.5M2.5,13.5H6.5" strokeWidth="1" /></Coin>
      <Coin label="Alternate" fill="#2888d8"><path d="M4,9L5.5,5L7,9M8.5,5V9H10.5M11,5H14M12.5,5V9M5,12H13" stroke="#f8e840" strokeWidth="1.3" /></Coin>
      <Sep />
      <Coin label="Swings" fill="#a8a8a8"><path d="M4,11V7L7,4L7,13M10,13V5M13,8V12" strokeWidth="1.3" /></Coin>
      <Coin label="Volume" fill="#a8a8a8"><path d="M5.5,5V13M9,8V13M12.5,10V13" strokeWidth="2" /></Coin>
      <Coin label="Fib" fill="#a8a8a8"><path d="M4,13V6H7M4,9H6.5M8.8,6V13M11,6V13H13.5V6ZM11,9.5H13.5" strokeWidth="1.3" /></Coin>
      <Coin label="Add pattern" fill="#c0c0c0"><path d="M8,4V10M13,4V13M8,8H13" strokeWidth="1.8" /><rect x="1" y="10" width="7" height="7" fill="#fff" strokeWidth="1" /><path d="M4.5,11.5V15.5M2.5,13.5H6.5" strokeWidth="1" /></Coin>
      <Sep />
      <div className="ml-1 flex gap-3 text-[12px]">
        <button>Daily</button>
        <button>Weekly</button>
        <button>Monthly</button>
      </div>
    </div>
  )
}

function ChartToolbar() {
  return (
    <div className="flex h-[25px] shrink-0 items-center bg-gradient-to-b from-[#fafafa] to-[#eeeeee]">
      <button className="flex w-14 shrink-0 items-center justify-between pr-0.5 text-[12px] whitespace-nowrap">
        <span className="-ml-1">CL 03-17</span><Caret />
      </button>
      <button className="ml-1.5 flex w-[182px] shrink-0 items-center justify-between text-[12px] whitespace-nowrap">
        Structural Trading Renko 20 Tick<Caret />
      </button>
      <span className="w-1 shrink-0" />
      <Sep />
      <Drop label="Chart style" tight><Candles /></Drop>
      <Drop label="Draw" tight><Pencil color="#f8d838" /></Drop>
      <Tool label="Zoom in"><Lens mark={<path d="M14,1V7M11,4H17" stroke="#18a030" strokeWidth="2" />} /></Tool>
      <Tool label="Zoom out"><Lens muted mark={<path d="M11,4H16" stroke="#aaa" strokeWidth="1.5" />} /></Tool>
      <Sep />
      <Drop label="Crosshair" tight><Cursor /></Drop>
      <Tool label="Data box"><Ico><rect x="2.5" y="1.5" width="13" height="15" fill="#fff" stroke="#888" strokeWidth="1" /><circle cx="10" cy="8" r="3.5" fill="#8fc4ec" stroke="#668" strokeWidth="1" /><path d="M4,14L7,11" stroke="#666" strokeWidth="2" /></Ico></Tool>
      <Sep />
      <Tool label="Chart trader"><Ico><rect x="1" y="2" width="8" height="3" fill="#30c030" stroke="none" /><rect x="1" y="8" width="6" height="3" fill="#e02020" stroke="none" /><path d="M9,3H16M7,9H12" strokeWidth="1" /><rect x="10" y="2" width="3" height="9" fill="#30c030" stroke="none" /><rect x="14" y="8" width="3" height="8" fill="#e02020" stroke="none" /></Ico></Tool>
      <Tool label="Data series"><Ico><rect x="1" y="1.5" width="16" height="15" fill="#e8e8e8" stroke="#888" strokeWidth="1" /><path d="M5,3V15M13,3V15M9,4V14" strokeWidth="1" /><rect x="3.5" y="5" width="3" height="7" fill="#30c030" stroke="none" /><rect x="7.5" y="5" width="3" height="7" fill="#30c030" stroke="none" /><rect x="11.5" y="5" width="3" height="8" fill="#e02020" stroke="none" /></Ico></Tool>
      <Tool label="Indicators"><Ico><rect x="1.5" y="1.5" width="15" height="15" fill="#dce4e4" stroke="#777" strokeWidth="1" /><path d="M3,9L6,5L9,8L12,4L15,7" stroke="#e05050" strokeWidth="1" /><path d="M3,13L7,10L10,13L15,9" stroke="#30a060" strokeWidth="1" /></Ico></Tool>
      <Tool label="Strategies"><Ico><path d="M3.5,1.5H12L15,4.5V16.5H3.5Z" fill="#fff" stroke="#888" strokeWidth="1" /><path d="M12,6H7V9H12V12.5H6.5M9.2,4.5V14" stroke="#189030" strokeWidth="1.4" /></Ico></Tool>
      <Tool label="Properties"><Ico><rect x="2.5" y="1.5" width="13" height="15" fill="#fff" stroke="#779" strokeWidth="1" /><rect x="3" y="2" width="12" height="3" fill="#4878d8" stroke="none" /><path d="M7,5V16M9,8H14M9,11H14" stroke="#88a8e8" strokeWidth="1" /><rect x="3" y="7" width="3" height="9" fill="#c8c8f0" stroke="none" /></Ico></Tool>
      <Sep />
      <button aria-label="Edit" className="flex h-[22px] w-[23px] shrink-0 items-center justify-center bg-[#d8d8d8]">
        <Ico><path d="M4,2L6,2L15,13L15.5,16L13,15L4,4Z" fill="#f0a030" stroke="#a06018" strokeWidth="0.8" /></Ico>
      </button>
    </div>
  )
}

/* ---------- windows ---------- */

function LinkButton() {
  return (
    <div className="flex items-center gap-0.5">
      <svg width="11" height="8" viewBox="0 0 11 8"><path d="M0,4L4,0V3H7V0L11,4L7,8V5H4V8Z" fill="#222" /></svg>
      <button className="h-5 w-[34px] border-2 border-b-[3px] border-[#0078d7] bg-[#f0f0f0] text-[11px] leading-3">L</button>
    </div>
  )
}

function WindowButtons({ muted, restore }: { muted?: boolean; restore?: boolean }) {
  return (
    <div className={muted ? "flex text-[#999999]" : "flex text-black"}>
      <button aria-label="Minimize" className="flex h-full w-[45px] items-center justify-center">
        <svg width="10" height="10" stroke="currentColor"><path d="M0,5.5H10" /></svg>
      </button>
      <button aria-label="Maximize" className="flex h-full w-[45px] items-center justify-center">
        <svg width="11" height="11" stroke="currentColor" fill="none">
          {restore ? <path d="M0.5,2.5h7v8h-7ZM2.5,2.5V0.5H10V8H8" /> : <rect x="0.5" y="0.5" width="9" height="9" />}
        </svg>
      </button>
      <button aria-label="Close" className="flex h-full w-[46px] items-center justify-center">
        <svg width="11" height="11" stroke="currentColor"><path d="M0.5,0.5L10.5,10.5M10.5,0.5L0.5,10.5" /></svg>
      </button>
    </div>
  )
}

const Chevron = ({ left }: { left?: boolean }) => (
  <svg width="6" height="9" viewBox="0 0 6 9" fill="none" stroke="#505050" strokeWidth="2">
    <path d={left ? "M5,0.5L1,4.5L5,8.5" : "M1,0.5L5,4.5L1,8.5"} />
  </svg>
)

function ProfileWindow() {
  return (
    <section className="absolute inset-0 flex flex-col bg-white">
      <header className="flex h-[22px] shrink-0 items-start justify-end pr-0.5">
        <div className="-mt-0.5 mr-1.5"><LinkButton /></div>
        <div className="flex h-5 items-center"><WindowButtons muted restore /></div>
      </header>
      <div className="h-[26px] shrink-0 bg-gradient-to-b from-[#fafafa] to-[#eeeeee]" />
      <div className="flex min-h-0 flex-1 justify-end bg-black">
        <ProfileChart />
      </div>
      <div className="flex h-[25px] shrink-0 items-center border-t border-white bg-[#f0f0f0]">
        <button aria-label="Scroll left" className="flex w-4 justify-center"><Chevron left /></button>
        <div className="flex h-[22px] flex-1 justify-end"><div className="w-[67px] bg-[#cdcdcd]" /></div>
        <button aria-label="Scroll right" className="flex w-[17px] justify-center"><Chevron /></button>
      </div>
    </section>
  )
}

function RenkoWindow() {
  return (
    <section className="absolute top-0 right-[461px] bottom-3 left-0 flex flex-col border-t border-r border-b border-[#3b92ec] bg-white shadow-[0_0_20px_rgba(0,0,0,0.45)]">
      <header className="flex h-[30px] shrink-0 items-start">
        <h1 className="ml-1.5 self-center text-[12px] whitespace-pre">{"CL 03-17 (Structural Trading Renko 20 Tick)  1/18/2017"}</h1>
        <div className="mr-0.5 ml-auto"><LinkButton /></div>
        <div className="flex h-7 items-center"><WindowButtons /></div>
      </header>
      <DrawingToolbar />
      <HarmonicsToolbar />
      <ChartToolbar />
      <RenkoChart />
      <div className="flex h-[22px] shrink-0 bg-[#f0f0f0]">
        <div className="w-[29%]" />
        <div className="flex-1 bg-[#cdcdcd]" />
        <button aria-label="Scroll right" className="flex w-[17px] items-center justify-center"><Chevron /></button>
      </div>
    </section>
  )
}

export default function App() {
  return (
    <main className="relative h-screen w-full overflow-hidden bg-[#e4e4e4] font-['Roboto',sans-serif] text-black">
      <ProfileWindow />
      <RenkoWindow />
    </main>
  )
}
